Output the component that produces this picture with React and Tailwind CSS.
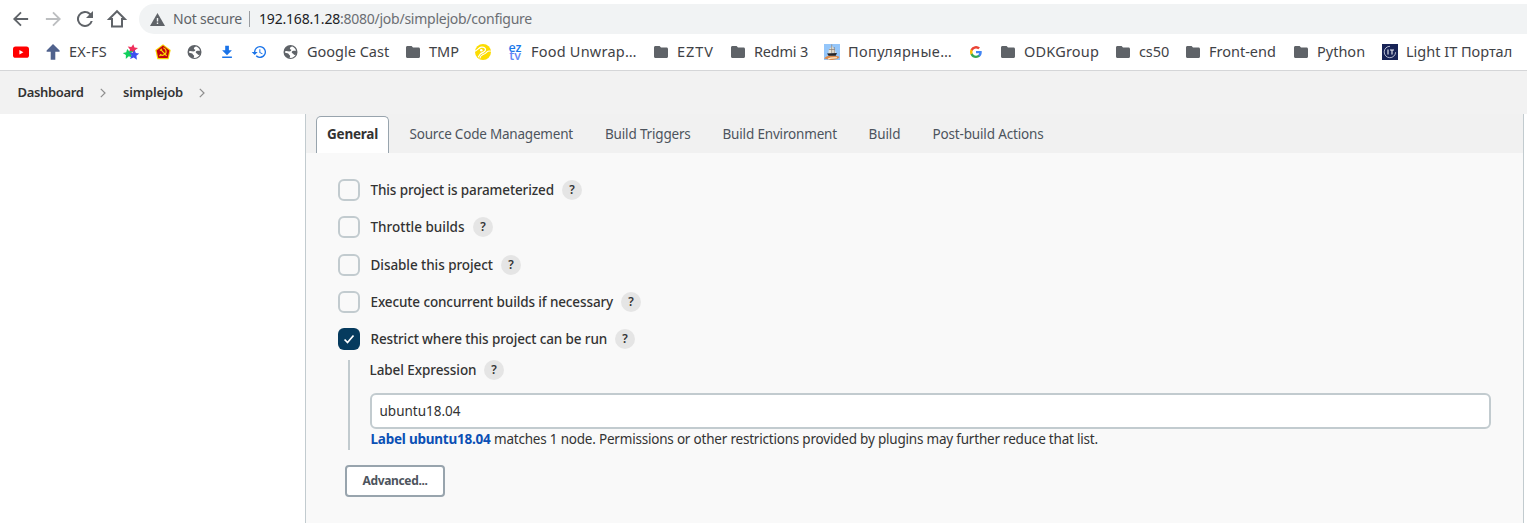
const STAR = 'M5 0l1.600 3 3.600.1-2.700 2.500.9 3.900L5 7.600 1.600 9.500l.9-3.900L-.2 3.100l3.600-.1z';

const icons = {
  youtube: (
    <svg viewBox="0 0 16 16" className="size-4">
      <rect x="0" y="2.500" width="16" height="11.300" rx="2.600" fill="#ff0000" />
      <path d="M6.400 5.900v4.500l4-2.250z" fill="#fff" />
    </svg>
  ),
  arrow: (
    <svg viewBox="0 0 16 16" className="size-4">
      <path d="M8 0L1.600 6.600v1.100h4.100V15.800h4.600V7.700h4.300V6.600z" fill="#50628d" />
    </svg>
  ),
  stars: (
    <svg viewBox="0 0 16 16" className="size-4">
      <path d={STAR} fill="#ee2f5b" transform="translate(4.600 .2) rotate(8 5 5)" />
      <path d={STAR} fill="#12d05c" transform="translate(.2 4.800) rotate(-12 5 5)" />
      <path d={STAR} fill="#3b50ef" transform="translate(6 5.900) rotate(6 5 5)" />
    </svg>
  ),
  pentagon: (
    <svg viewBox="0 0 16 16" className="size-4">
      <path d="M8 .3L15.700 6 13.600 15.200H2.400L.3 6z" fill="#f6d500" />
      <path d="M8 1.600L14.400 6.400 12.700 14H3.300L1.600 6.400z" fill="#c4000d" />
      <path d="M8.400 3.800c3 1.300 3.600 4.800 1.500 6.500-1.500 1.300-3.500 1-4.700.1M4.500 12l1.800-1.800M5 6.500l2-1.600M6 5.800l5.600 6" stroke="#f9dd00" strokeWidth="1.200" fill="none" />
    </svg>
  ),
  globe: (
    <svg viewBox="0 0 16 16" className="size-4">
      <circle cx="7.500" cy="8" r="7" fill="#5f6368" />
      <path
        d="M9.300 2.600C8 2.800 6.900 3.500 6.900 4.600c0 .8.600 1.100 1.400 1.100 0 1.200-.7 1.700-2 1.700-1.400 0-2.300-.6-4-.3l-.2 1.700c1.500.6 3.300.3 3.700 1.400.3.800 1.100.9 1.300 1.600.2.600-.1 1.300-.6 2 2.500.4 5-.6 6.200-3-.9.300-1.900.1-2.300-.7-.5-1-1.700-.8-1.700-1.900 0-1.300 1.500-1.500 2.600-1.500.6 0 1.200.2 1.700.100-.4-1.900-1.800-3.500-3.700-4.200z"
        fill="#fff"
      />
    </svg>
  ),
  download: (
    <svg viewBox="0 0 16 16" className="size-4">
      <path d="M6.200 1.700h3.700v4.600h3L8 11.200 3.100 6.300h3.100zM3.200 12.500h9.700V14H3.200z" fill="#1a73e8" />
    </svg>
  ),
  history: (
    <svg viewBox="0 0 24 24" className="size-4">
      <path d="M13.500 3a9 9 0 0 0-9 9H1l4.500 4.500L10 12H6.500a7 7 0 1 1 2.060 4.940l-1.420 1.420A9 9 0 1 0 13.500 3zM12.500 8v5l4.280 2.540.72-1.210-3.500-2.080V8z" fill="#1a73e8" />
    </svg>
  ),
  folder: (
    <svg viewBox="2 4 20 16" className="h-3 w-[14px]" preserveAspectRatio="none">
      <path d="M10 4H4c-1.100 0-2 .9-2 2v12c0 1.100.9 2 2 2h16c1.100 0 2-.9 2-2V8c0-1.100-.9-2-2-2h-8z" fill="#5f6368" />
    </svg>
  ),
  lifecell: (
    <svg viewBox="0 0 16 16" className="size-4">
      <circle cx="8" cy="8" r="8" fill="#fcdc00" />
      <path d="M0 7.200C2.200 6.200 3.700 3.900 6.200 3.200c2.700-.6 4.600 1 4.200 3-.4 2-3.600 2.300-5.200 3.900-.8.800-1.400 2-1.900 3.200" fill="none" stroke="#fff" strokeWidth="1.200" />
      <path d="M4.800 14.500c.4-1.900 1.500-3.200 3.200-3.900 2.400-.9 3-1.700 4.200-2.900 1.100-1 2.300-.8 3.600-.4" fill="none" stroke="#fff" strokeWidth="1.100" />
      <circle cx="6.300" cy="6.300" r="1.300" fill="#fff" />
    </svg>
  ),
  eztv: (
    <span className="flex size-4 flex-col items-center justify-center font-['Open_Sans',sans-serif] text-[12.500px] leading-[8px] font-semibold">
      <span className="text-[#1a78ea]">ez</span>
      <span className="text-[#6487f5]">tv</span>
    </span>
  ),
  ship: (
    <svg viewBox="0 0 16 16" className="size-4">
      <rect width="16" height="16" fill="#94c6fa" />
      <path d="M0 14.500c2-2.500 5-3 8-3s6 .5 7.500 1.500c-1 2-5 3-8.500 3z" fill="#dc8b4e" />
      <path d="M4 15c3-1.500 6-1 9-1.300" stroke="#fff0cf" strokeWidth="1.100" fill="none" />
      <path d="M7.500 1v2L4.800 5.600 4.400 9.200h7.600l-1.200-3.500L9 3.300z" fill="#e9e3d5" />
      <path d="M7.700.4v9M10.300 3v6M4.900 5.500h5.900" stroke="#867d74" strokeWidth=".7" />
      <path d="M3 9.400l10-.5-1.300 2.800H4.600z" fill="#272424" />
    </svg>
  ),
  google: (
    <svg viewBox="0 0 24 24" className="size-3">
      <path d="M23.500 12.300c0-.8-.1-1.600-.2-2.300H12v4.600h6.500a5.500 5.500 0 0 1-2.400 3.600v3h3.900c2.200-2.100 3.500-5.200 3.500-8.900z" fill="#4285f4" />
      <path d="M12 24c3.200 0 6-1.100 8-2.900l-3.900-3c-1.100.7-2.500 1.200-4.100 1.200-3.100 0-5.800-2.100-6.700-5H1.300v3.100A12 12 0 0 0 12 24z" fill="#34a853" />
      <path d="M5.300 14.300a7.300 7.300 0 0 1 0-4.600V6.600h-4a12 12 0 0 0 0 10.800z" fill="#fbbc05" />
      <path d="M12 4.800c1.800 0 3.300.6 4.600 1.800l3.400-3.400A12 12 0 0 0 1.300 6.600l4 3.100c.9-2.900 3.600-4.900 6.700-4.900z" fill="#ea4335" />
    </svg>
  ),
  lightit: (
    <svg viewBox="0 0 16 16" className="size-4">
      <rect width="16" height="16" fill="#172356" />
      <path d="M13.600 8.200A5.700 5.700 0 1 1 8 2.300" stroke="#c3c8db" strokeWidth=".9" fill="none" />
      <path d="M6 5.500v5M8 6h4M10 6v4.500" stroke="#eceef5" strokeWidth="1.100" />
    </svg>
  ),
};

const bookmarks = [
  { icon: 'youtube', width: 'w-8' },
  { icon: 'arrow', label: 'EX-FS', width: 'w-[78px]', tracking: 'tracking-[0.26px]' },
  { icon: 'stars', width: 'w-8' },
  { icon: 'pentagon', width: 'w-8' },
  { icon: 'globe', width: 'w-8' },
  { icon: 'download', width: 'w-8' },
  { icon: 'history', width: 'w-8' },
  { icon: 'globe', label: 'Google Cast', width: 'w-[122px]' },
  { icon: 'folder', label: 'TMP', width: 'w-[70px]' },
  { icon: 'lifecell', width: 'w-8' },
  { icon: 'eztv', label: 'Food Unwrap…', width: 'w-[146px]', tracking: 'tracking-[0.22px]' },
  { icon: 'folder', label: 'EZTV', width: 'w-[77px]', tracking: 'tracking-[0.95px]' },
  { icon: 'folder', label: 'Redmi 3', width: 'w-[94px]', tracking: 'tracking-[-0.2px]' },
  { icon: 'ship', label: 'Популярные…', width: 'w-36', tracking: 'tracking-[0.39px]' },
  { icon: 'google', width: 'w-8' },
  { icon: 'folder', label: 'ODKGroup', width: 'w-[115px]', tracking: 'tracking-[0.19px]' },
  { icon: 'folder', label: 'cs50', width: 'w-[70px]', tracking: 'tracking-[-0.1px]' },
  { icon: 'folder', label: 'Front-end', width: 'w-[108px]' },
  { icon: 'folder', label: 'Python', width: 'w-[89px]' },
  { icon: 'lightit', label: 'Light IT Портал', width: 'w-[140px]' },
];

const tabs = [
  { label: 'Source Code Management', style: 'w-[195.500px] tracking-[-0.21px]' },
  { label: 'Build Triggers', style: 'w-[117.500px] tracking-[-0.17px]' },
  { label: 'Build Environment', style: 'w-[146px] tracking-[-0.17px]' },
  { label: 'Build', style: 'w-16 tracking-[-0.08px]' },
  { label: 'Post-build Actions', style: 'tracking-[-0.16px]' },
];

const options = [
  { label: 'This project is parameterized', style: 'w-[183px] tracking-[-0.12px]' },
  { label: 'Throttle builds', style: 'w-[94px]' },
  { label: 'Disable this project', style: 'w-[122px] tracking-[-0.06px]' },
  { label: 'Execute concurrent builds if necessary', style: 'w-[242px] tracking-[-0.12px]' },
  { label: 'Restrict where this project can be run', style: 'w-[236px] tracking-[-0.12px]', checked: true },
];

function Help() {
  return (
    <span className="flex size-5 shrink-0 items-center justify-center rounded-full bg-[#e5e5e5] text-[12px] leading-none font-semibold text-[#333]">
      ?
    </span>
  );
}

function Toolbar() {
  return (
    <div className="flex h-[34px] items-end bg-white">
      <div className="flex h-[30px] w-[139px] shrink-0 items-center gap-2 pl-[9px] text-[#5f6368]">
        <svg viewBox="0 0 24 24" className="size-6 p-[2.500px]">
          <path d="M21 12H4M12 3.500L3.500 12l8.500 8.500" fill="none" stroke="currentColor" strokeWidth="2.300" />
        </svg>
        <svg viewBox="0 0 24 24" className="size-6 p-[2.500px] text-[#bcbec0]">
          <path d="M3 12h17M12 3.500l8.500 8.500-8.500 8.500" fill="none" stroke="currentColor" strokeWidth="2.300" />
        </svg>
        <svg viewBox="0 0 24 24" className="size-6">
          <path d="M17.650 6.350A8 8 0 1 0 19.730 14h-2.080A6 6 0 1 1 12 6c1.660 0 3.140.69 4.220 1.780L13 11h7V4z" fill="currentColor" />
        </svg>
        <svg viewBox="0 0 24 24" className="size-6">
          <path d="M12 4.200L4.200 12H7v7.600h10V12h2.800z" fill="none" stroke="currentColor" strokeWidth="2" />
        </svg>
      </div>
      <div className="flex h-[30px] flex-1 items-center rounded-l-full bg-[#f1f3f4] pl-[11px] text-[14px] whitespace-nowrap">
        <svg viewBox="0 0 15 13" className="mr-[8px] h-[13px] w-[15px]">
          <path d="M7.500 0L15 13H0z" fill="#5f6368" />
          <path d="M6.800 5h1.400v3.400H6.800zM6.800 9.600h1.400V11H6.800z" fill="#f1f3f4" />
        </svg>
        <span className="w-[76px] pb-px tracking-[-0.22px] text-[#5f6368]">Not secure</span>
        <span className="mr-[9px] h-4 w-px bg-[#9a9da1]" />
        <span className="w-[81px] pb-px tracking-[-0.19px] text-[#202124]">192.168.1.28</span>
        <span className="pb-px tracking-[-0.25px] text-[#6b6e73]">:8080/job/simplejob/configure</span>
      </div>
    </div>
  );
}

function Bookmarks() {
  return (
    <div className="flex h-[37px] items-center overflow-hidden border-b border-[#d5d6d8] bg-white pl-[13px] text-[14.500px] text-[#3f4246]">
      {bookmarks.map((b, i) => (
        <div key={i} className={`flex shrink-0 items-center gap-2 whitespace-nowrap ${b.width}`}>
          <span className="flex size-4 shrink-0 items-center justify-center">{icons[b.icon]}</span>
          {b.label && <span className={b.tracking}>{b.label}</span>}
        </div>
      ))}
    </div>
  );
}

function Chevron() {
  return (
    <svg viewBox="0 0 6 10" className="h-[10px] w-[6px]">
      <path d="M.8.800L5 5 .8 9.200" fill="none" stroke="#8e8e8e" strokeWidth="1.200" />
    </svg>
  );
}

export default function App() {
  return (
    <div className="flex h-[523px] w-[1527px] flex-col overflow-hidden bg-white font-['Noto_Sans',sans-serif] text-[#333]">
      <Toolbar />
      <Bookmarks />
      <nav className="flex h-[43px] shrink-0 items-center bg-[#f2f2f2] pl-[17.500px] text-[13px] font-semibold">
        <span className="w-[82.500px] tracking-[-0.34px]">Dashboard</span>
        <Chevron />
        <span className="ml-[17px] w-[76px] tracking-[-0.2px]">simplejob</span>
        <Chevron />
      </nav>
      <main className="mr-[3px] ml-[305px] flex-1 border-x border-[#c2cbcf] bg-[#f9f9f9]">
        <div className="flex h-[39px] items-end bg-[#f1f1f1] pl-[10px] text-[13.500px] whitespace-nowrap text-[#4d545d]">
          <div className="mr-[20.500px] flex h-[37px] w-[73px] items-center justify-center rounded-t-[5px] border border-b-0 border-[#98a4ad] bg-white pb-[2px] font-bold tracking-[-0.24px] text-[#333]">
            General
          </div>
          {tabs.map((t) => (
            <div key={t.label} className={`flex h-[37px] items-center ${t.style}`}>
              {t.label}
            </div>
          ))}
        </div>

        <div className="px-8 pt-[18.400px] text-[13.500px] whitespace-nowrap">
          {options.map((o) => (
            <label key={o.label} className="flex h-[37.300px] items-center font-medium">
              <span
                className={`mr-[10.500px] flex size-[22px] items-center justify-center rounded-[6px] ${
                  o.checked ? 'bg-[#063b5e]' : 'border-2 border-[#c2cbcf]'
                }`}
              >
                {o.checked && (
                  <svg viewBox="0 0 22 22" className="size-[22px]">
                    <path d="M6.600 11.500l2.900 3 6-7" fill="none" stroke="#fff" strokeWidth="1.700" />
                  </svg>
                )}
              </span>
              <span className={o.style}>{o.label}</span>
              <span className="ml-[8.500px]">
                <Help />
              </span>
            </label>
          ))}

          <div className="mt-[2.100px] ml-[10px] h-[90px] border-l-2 border-[#c2cbcf] pl-5">
            <div className="flex h-5 items-center font-medium">
              <span className="-ml-[0.500px] w-[114.500px] tracking-[-0.07px]">Label Expression</span>
              <Help />
            </div>
            <input
              type="text"
              defaultValue="ubuntu18.04"
              className="mt-[13px] block h-9 w-full rounded-[6px] border-2 border-[#c2cbcf] bg-white px-[7.500px] outline-none"
            />
            <div className="flex h-5 items-center">
              <a className="w-[124px] pl-[0.500px] font-bold tracking-[-0.23px] text-[#0b50b5]">Label ubuntu18.04</a>
              <span className="tracking-[-0.205px]">
                matches 1 node. Permissions or other restrictions provided by plugins may further reduce that list.
              </span>
            </div>
          </div>

          <button className="mt-[15px] ml-[7px] block h-8 w-[100px] rounded-[4px] border-2 border-[#98a4ad] bg-white text-[12px] font-bold tracking-[-0.34px] text-[#4d545d]">
            Advanced...
          </button>
        </div>
      </main>
    </div>
  );
}
